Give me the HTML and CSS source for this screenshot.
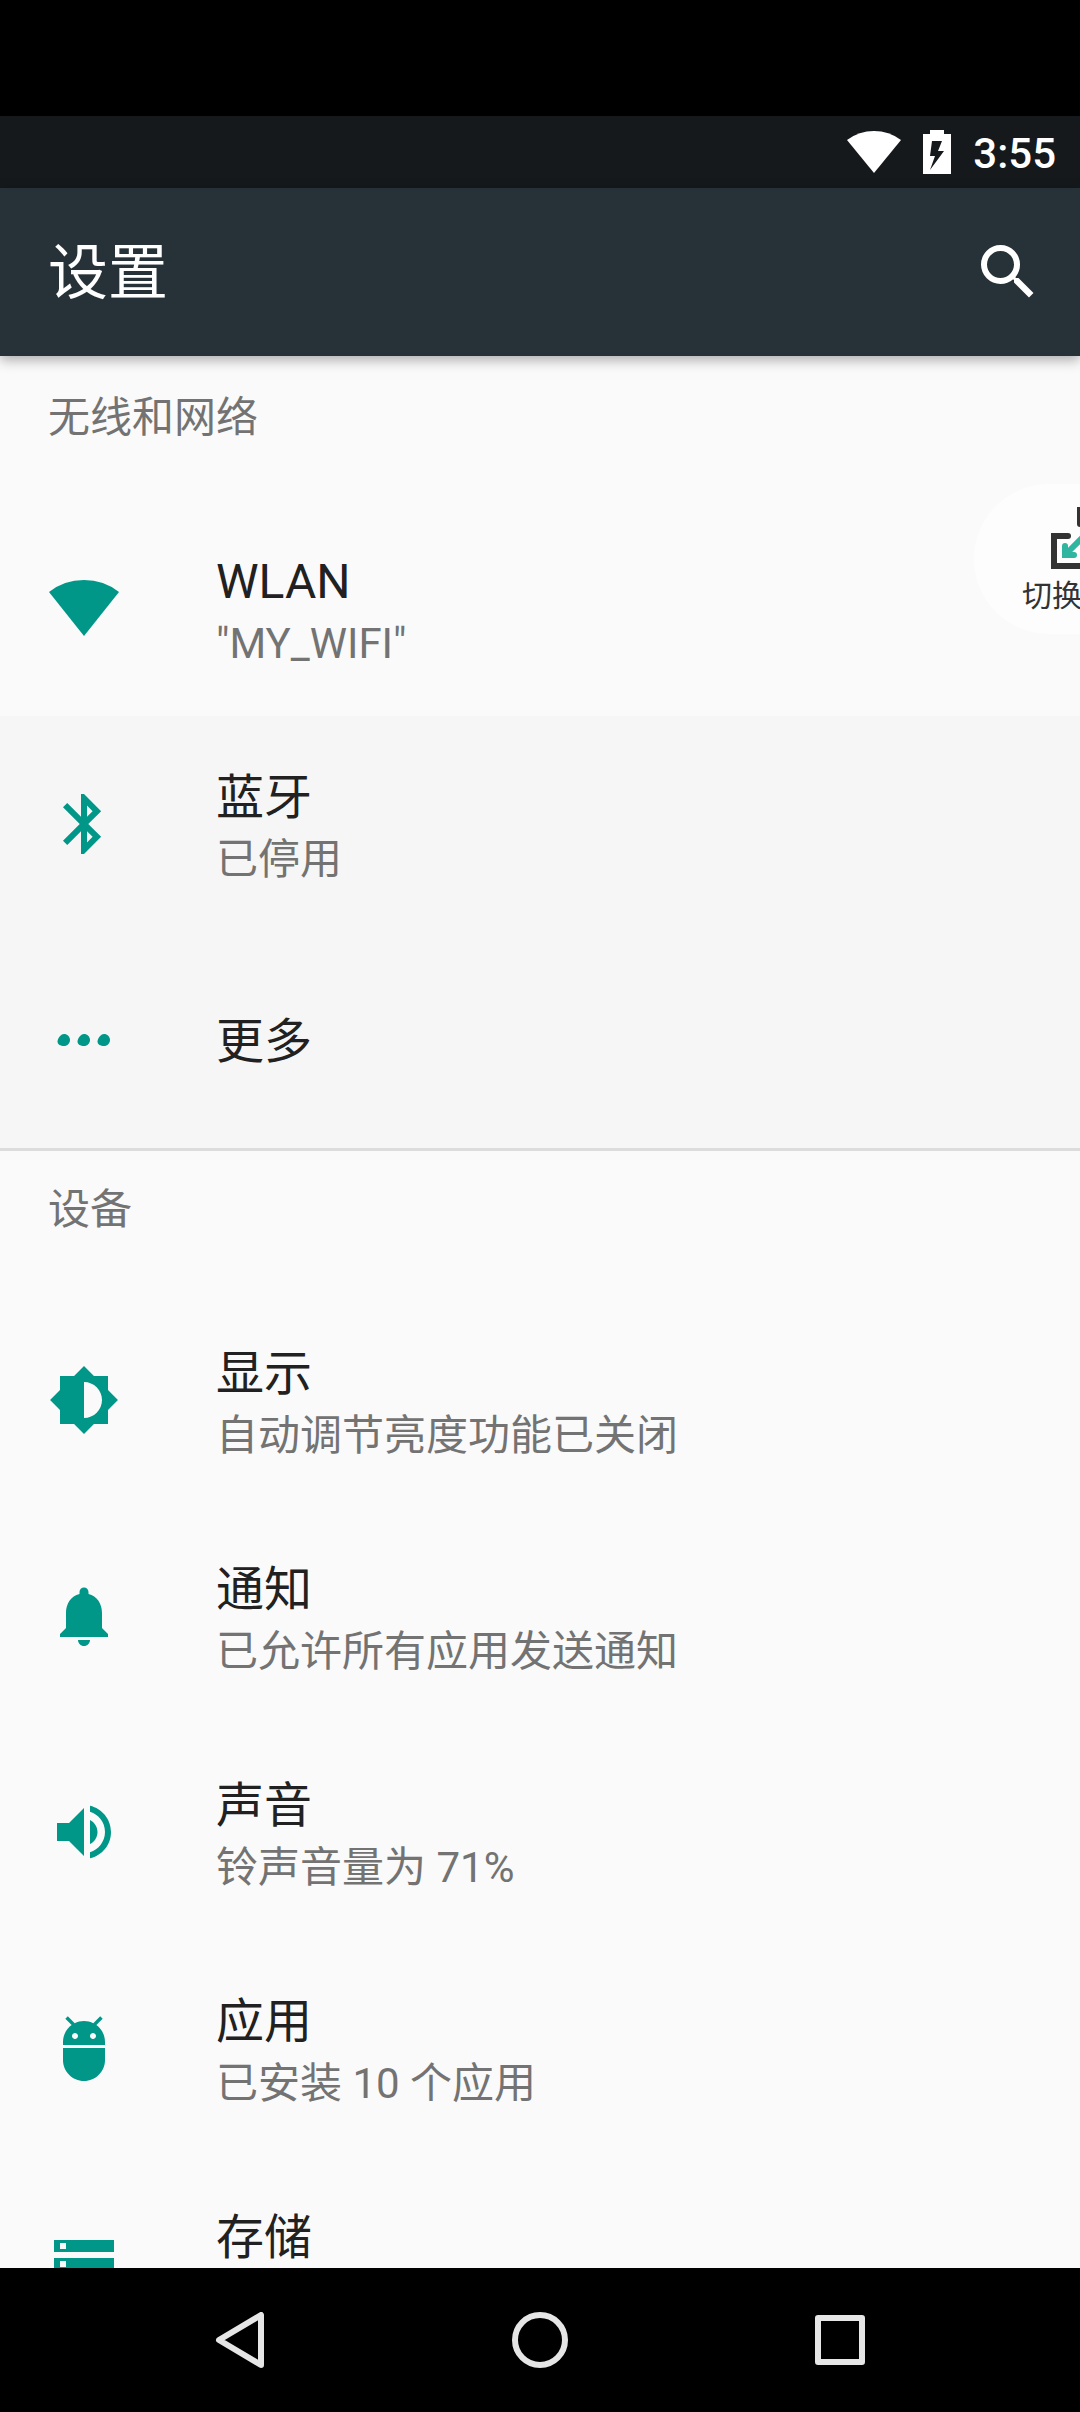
FILE: index.html
```html
<!DOCTYPE html>
<html lang="zh-CN">
<head>
<meta charset="utf-8">
<meta name="viewport" content="width=device-width">
<title>设置</title>
<link rel="stylesheet" href="styles.css">
</head>
<body>
<div class="screen">
  <div class="status-bar">
    <svg class="status-wifi" viewBox="0 0 54 44" aria-hidden="true"><path d="M27 43L0 10Q12 1 27 1T54 10Z"/></svg>
    <svg class="status-battery" viewBox="0 0 28 44" aria-hidden="true"><path fill-rule="evenodd" d="M7 0H21V4H28V44H0V4H7ZM9 11L7 26H12L7 40L21 21H15L19 11Z"/></svg>
    <time class="clock">3:55</time>
  </div>

  <header class="toolbar">
    <h1 class="toolbar-title">设置</h1>
    <button class="icon-button" type="button" aria-label="搜索">
      <svg class="icon" viewBox="0 0 24 24"><path d="M15.5 14h-.79l-.28-.27A6.47 6.47 0 0 0 16 9.5 6.5 6.5 0 1 0 9.5 16c1.61 0 3.09-.59 4.23-1.57l.27.28v.79l5 4.99L20.49 19l-4.99-5zm-6 0C7.01 14 5 11.99 5 9.5S7.01 5 9.5 5 14 7.01 14 9.5 11.99 14 9.5 14z"/></svg>
    </button>
  </header>

  <main class="content">
    <section class="group">
      <h2 class="group-title">无线和网络</h2>
      <ul class="list">
        <li><a class="row" href="#wlan">
          <svg class="icon" viewBox="0 0 72 72" aria-hidden="true"><path d="M36 64L1 20Q16 8 36 8T71 20Z"/></svg>
          <span class="row-text"><span class="row-title">WLAN</span><span class="row-summary">"MY_WIFI"</span></span>
        </a></li>
        <li><a class="row row-shaded" href="#bluetooth">
          <svg class="icon" viewBox="0 0 24 24" aria-hidden="true"><path d="M17.71 7.71L12 2h-1v7.59L6.41 5 5 6.41 10.59 12 5 17.59 6.41 19 11 14.41V22h1l5.71-5.71-4.3-4.29 4.3-4.29zM13 5.83l1.88 1.88L13 9.59V5.83zm1.88 10.46L13 18.17v-3.76l1.88 1.88z"/></svg>
          <span class="row-text"><span class="row-title">蓝牙</span><span class="row-summary">已停用</span></span>
        </a></li>
        <li><a class="row row-shaded" href="#more">
          <svg class="icon" viewBox="0 0 72 72" aria-hidden="true">
            <path d="M16 30c3.3 0 6 2.7 6 6s-2.7 6-6 6c-3.5 0-6.5-1.5-6.5-4.5C9.5 35 12.5 30 16 30z"/>
            <path d="M36 30c3.3 0 6 2.7 6 6s-2.7 6-6 6c-3.5 0-6.5-1.5-6.5-4.5C29.5 35 32.5 30 36 30z"/>
            <path d="M56 30c3.3 0 6 2.7 6 6s-2.7 6-6 6c-3.5 0-6.5-1.5-6.5-4.5C49.5 35 52.5 30 56 30z"/>
          </svg>
          <span class="row-text"><span class="row-title">更多</span></span>
        </a></li>
      </ul>
    </section>

    <section class="group group-divided">
      <h2 class="group-title">设备</h2>
      <ul class="list">
        <li><a class="row" href="#display">
          <svg class="icon" viewBox="0 0 24 24" aria-hidden="true"><path d="M20 15.31L23.31 12 20 8.69V4h-4.69L12 .69 8.69 4H4v4.69L.69 12 4 15.31V20h4.69L12 23.31 15.31 20H20v-4.69zM12 18V6c3.31 0 6 2.69 6 6s-2.69 6-6 6z"/></svg>
          <span class="row-text"><span class="row-title">显示</span><span class="row-summary">自动调节亮度功能已关闭</span></span>
        </a></li>
        <li><a class="row" href="#notifications">
          <svg class="icon" viewBox="0 0 24 24" aria-hidden="true"><path d="M12 22c1.1 0 2-.9 2-2h-4c0 1.1.89 2 2 2zm6-6v-5c0-3.07-1.64-5.64-4.5-6.32V4c0-.83-.67-1.5-1.5-1.5s-1.5.67-1.5 1.5v.68C7.63 5.36 6 7.92 6 11v5l-2 2v1h16v-1l-2-2z"/></svg>
          <span class="row-text"><span class="row-title">通知</span><span class="row-summary">已允许所有应用发送通知</span></span>
        </a></li>
        <li><a class="row" href="#sound">
          <svg class="icon" viewBox="0 0 24 24" aria-hidden="true"><path d="M3 9v6h4l5 5V4L7 9H3zm13.5 3c0-1.77-1.02-3.29-2.5-4.03v8.05c1.48-.73 2.5-2.25 2.5-4.02zM14 3.23v2.06c2.89.86 5 3.54 5 6.71s-2.11 5.85-5 6.71v2.06c4.01-.91 7-4.49 7-8.77s-2.99-7.86-7-8.77z"/></svg>
          <span class="row-text"><span class="row-title">声音</span><span class="row-summary">铃声音量为 71%</span></span>
        </a></li>
        <li><a class="row" href="#apps">
          <svg class="icon" viewBox="0 0 24 24" aria-hidden="true"><path d="M5 16c0 3.87 3.13 7 7 7s7-3.13 7-7v-4H5v4zM16.12 4.37l2.1-2.1-.82-.83-2.3 2.31C14.16 3.28 13.12 3 12 3s-2.16.28-3.09.75L6.6 1.44l-.82.83 2.1 2.1C6.14 5.64 5 7.68 5 10v1h14v-1c0-2.32-1.14-4.36-2.88-5.63zM9 9c-.55 0-1-.45-1-1s.45-1 1-1 1 .45 1 1-.45 1-1 1zm6 0c-.55 0-1-.45-1-1s.45-1 1-1 1 .45 1 1-.45 1-1 1z"/></svg>
          <span class="row-text"><span class="row-title">应用</span><span class="row-summary">已安装 10 个应用</span></span>
        </a></li>
        <li><a class="row" href="#storage">
          <svg class="icon" viewBox="0 0 24 24" aria-hidden="true"><path d="M2 20h20v-4H2v4zm2-3h2v2H4v-2zM2 4v4h20V4H2zm4 3H4V5h2v2zm-4 7h20v-4H2v4zm2-3h2v2H4v-2z"/></svg>
          <span class="row-text row-text-two-line"><span class="row-title">存储</span></span>
        </a></li>
      </ul>
    </section>
  </main>

  <button class="floating-switch" type="button">
    <svg class="switch-icon" viewBox="0 0 60 62" aria-hidden="true">
      <g fill="none" stroke="#333" stroke-width="6">
        <path d="M17 29H3V59H57V45"/>
        <path d="M29 17V3H57V33H43"/>
      </g>
      <g fill="#333"><circle cx="17" cy="29" r="3"/><circle cx="29" cy="17" r="3"/></g>
      <g fill="none" stroke="#2fb5a0" stroke-width="6">
        <path d="M14 39V48H23"/>
        <path d="M14 48L38 24"/>
      </g>
      <g fill="#2fb5a0"><circle cx="14" cy="39" r="3"/><circle cx="23" cy="48" r="3"/></g>
    </svg>
    <span class="switch-label">切换</span>
  </button>

  <nav class="nav-bar">
    <button class="nav-button" type="button" aria-label="返回"><svg class="nav-icon" viewBox="0 0 56 56"><path d="M49 3V53L7 28Z"/></svg></button>
    <button class="nav-button" type="button" aria-label="主屏幕"><svg class="nav-icon" viewBox="0 0 56 56"><circle cx="28" cy="28" r="25"/></svg></button>
    <button class="nav-button" type="button" aria-label="最近任务"><svg class="nav-icon" viewBox="0 0 56 56"><path d="M6 6H50V50H6Z"/></svg></button>
  </nav>
</div>
</body>
</html>
```
FILE: styles.css
```css
* {
  box-sizing: border-box;
}

body,
h1,
h2,
ul {
  margin: 0;
  padding: 0;
}

body {
  background: #000;
  font-family: Roboto, "Noto Sans CJK SC", sans-serif;
}

button {
  border: 0;
  padding: 0;
  background: none;
  font: inherit;
  color: inherit;
}

svg {
  display: block;
  fill: currentColor;
}

.screen {
  position: relative;
  display: flex;
  flex-direction: column;
  height: 100vh;
  padding-top: 116px;
  overflow: hidden;
}

/* Status bar */
.status-bar {
  display: flex;
  flex: none;
  align-items: center;
  justify-content: flex-end;
  gap: 22px;
  height: 72px;
  padding-right: 24px;
  background: #15191c;
  color: #fff;
}

.status-wifi {
  width: 54px;
  height: 44px;
}

.status-battery {
  width: 28px;
  height: 44px;
}

.clock {
  padding-top: 4px;
  font-size: 42px;
  font-weight: 500;
  line-height: 68px;
}

/* Toolbar */
.toolbar {
  position: relative;
  z-index: 1;
  display: flex;
  flex: none;
  align-items: center;
  justify-content: space-between;
  height: 168px;
  padding: 0 36px 0 48px;
  background: #273238;
  color: #fff;
  box-shadow: 0 4px 12px rgba(0, 0, 0, 0.32);
}

.toolbar-title {
  padding-top: 4px;
  font-size: 60px;
  font-weight: 400;
  line-height: 72px;
}

.icon {
  flex: none;
  width: 72px;
  height: 72px;
}

/* Settings list */
.content {
  flex: 1;
  min-height: 0;
  overflow: hidden;
  background: #fafafa;
}

.group-divided {
  border-top: 3px solid #dcdcdc;
}

.group-title {
  padding: 32px 48px 52px;
  color: #737373;
  font-size: 42px;
  font-weight: 400;
  line-height: 60px;
}

.group-divided .group-title {
  padding-top: 29px;
}

.list {
  list-style: none;
}

.row {
  display: flex;
  align-items: center;
  gap: 96px;
  height: 216px;
  padding: 0 48px;
  color: #009688;
  text-decoration: none;
}

.row-shaded {
  background: #f6f6f6;
}

.row-text {
  display: flex;
  flex-direction: column;
  padding-top: 4px;
}

/* Keeps the height of a title with a summary under it */
.row-text-two-line {
  min-height: 128px;
}

.row-title {
  color: #212121;
  font-size: 48px;
  line-height: 68px;
}

.row-summary {
  color: #737373;
  font-size: 42px;
  line-height: 56px;
}

/* Floating pill that hangs over the right edge */
.floating-switch {
  position: absolute;
  top: 484px;
  right: -110px;
  z-index: 2;
  display: flex;
  flex-direction: column;
  align-items: flex-start;
  gap: 6px;
  width: 216px;
  height: 150px;
  padding: 23px 48px 0;
  border-radius: 75px;
  background: #fdfdfd;
  color: #333;
}

.switch-icon {
  width: 60px;
  height: 62px;
  margin-left: 29px;
}

.switch-label {
  font-size: 30px;
  line-height: 42px;
}

/* Navigation bar */
.nav-bar {
  display: flex;
  flex: none;
  justify-content: center;
  height: 144px;
  background: #000;
  color: #e6e6e6;
}

.nav-button {
  display: flex;
  align-items: center;
  justify-content: center;
  width: 300px;
}

.nav-icon {
  width: 56px;
  height: 56px;
  fill: none;
  stroke: currentColor;
  stroke-width: 6;
  stroke-linejoin: round;
}
```
